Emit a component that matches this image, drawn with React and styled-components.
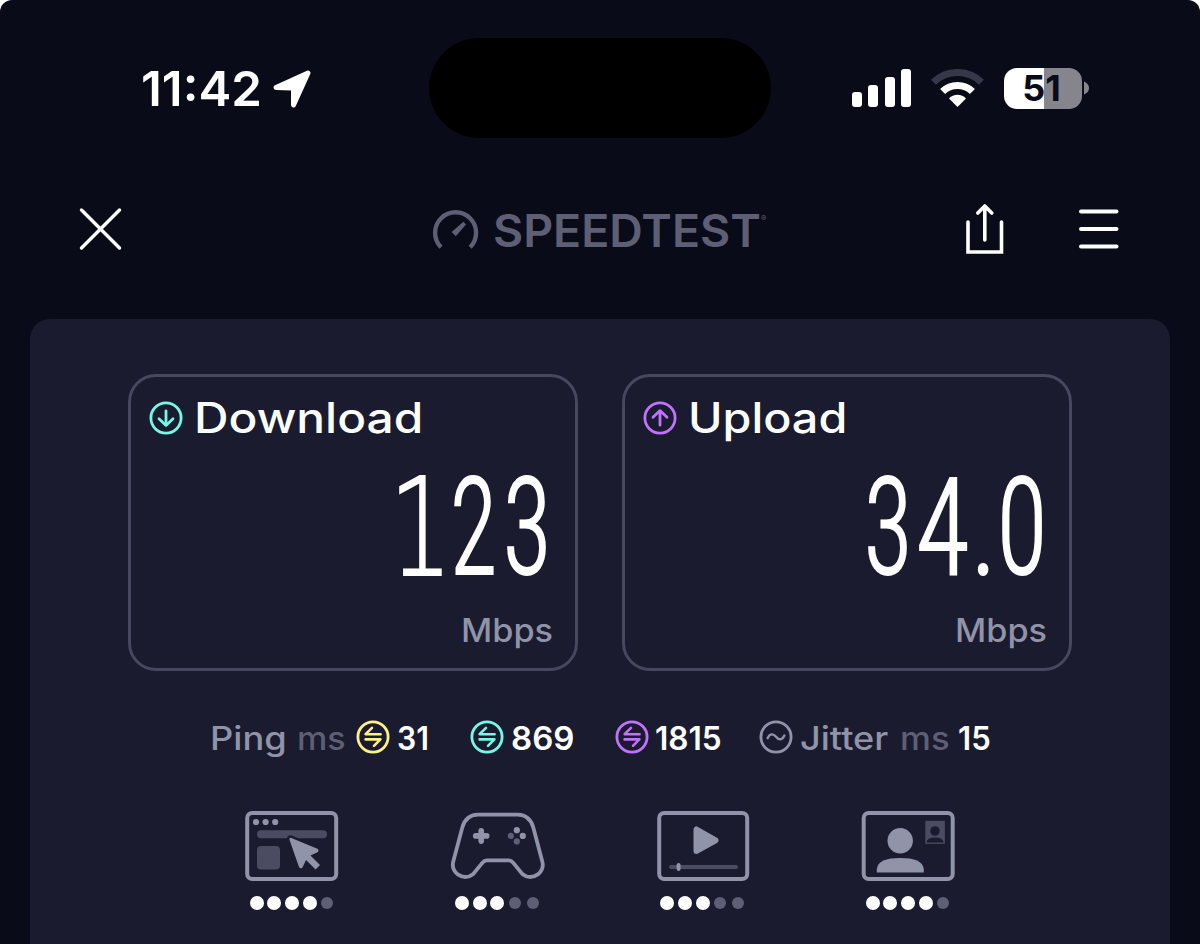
import React, { useLayoutEffect, useRef, useState } from 'react';
import styled, { createGlobalStyle, css } from 'styled-components';

const GlobalStyle = createGlobalStyle`
  * {
    box-sizing: border-box;
  }

  body {
    margin: 0;
    background: #ffffff;
    font-family: Inter, 'Liberation Sans', sans-serif;
    overflow: hidden;
  }

  svg {
    display: block;
    flex: none;
  }
`;

const Screen = styled.div`
  width: 1200px;
  height: 944px;
  overflow: hidden;
  border-radius: 12px 12px 0 0;
  background: #090b18;
  color: #ffffff;
  display: flex;
  flex-direction: column;
`;

/* text stretched to a given width */
const FitBox = styled.span`
  display: block;
  flex: none;
  white-space: nowrap;
  width: ${({ $width }) => $width}px;
  margin-left: ${({ $gap }) => $gap || 0}px;
`;

const FitText = styled.span`
  display: inline-block;
  vertical-align: top;
  transform-origin: 0 50%;
`;

const Fit = ({ width, gap, children }) => {
  const ref = useRef(null);
  const [scale, setScale] = useState(1);

  useLayoutEffect(() => {
    setScale(width / ref.current.offsetWidth);
  }, [width]);

  return (
    <FitBox $width={width} $gap={gap}>
      <FitText ref={ref} style={{ transform: `scaleX(${scale})` }}>{children}</FitText>
    </FitBox>
  );
};

const StatusBar = styled.header`
  display: grid;
  grid-template-columns: 429px 342px 429px;
  height: 138px;
  padding-top: 38px;
`;

const StatusLeft = styled.div`
  display: flex;
  align-items: center;
  padding: 2px 0 0 141px;
  gap: 11px;
`;

const Time = styled.div`
  font-size: 48.5px;
  font-weight: 600;
  line-height: 60px;
`;

const Island = styled.div`
  border-radius: 50px;
  background: #000000;
`;

const StatusRight = styled.div`
  display: flex;
  align-items: center;
  padding-left: 81px;
`;

const Signal = styled.div`
  display: flex;
  align-items: flex-end;
  gap: 6.4px;
  height: 38px;
  margin-right: 20px;
`;

const SignalBar = styled.span`
  width: 10px;
  height: ${({ $height }) => $height}px;
  border-radius: 3px;
  background: #ffffff;
`;

const Battery = styled.div`
  width: 78px;
  height: 41px;
  margin-left: 20px;
  border-radius: 13px;
  background: linear-gradient(90deg, #ffffff 51%, #85858d 51%);
  color: #090b18;
  font-size: 36px;
  font-weight: 700;
  line-height: 41px;
  padding-left: 18px;
`;

const NavBar = styled.nav`
  display: flex;
  align-items: center;
  height: 181px;
  padding: 1px 80px 0 78px;
`;

const Brand = styled.div`
  display: flex;
  align-items: center;
  margin: 1px 0 0 309px;
  color: #5e5f75;
`;

const BrandName = styled.div`
  font-size: 44.5px;
  font-weight: 600;
  line-height: 48px;
  margin-left: 14px;
  padding-top: 2px;
`;

const Registered = styled.span`
  font-size: 8px;
  align-self: flex-start;
  margin-top: 8px;
`;

const NavActions = styled.div`
  display: flex;
  align-items: center;
  gap: 73px;
  margin-left: auto;
`;

const Panel = styled.main`
  flex: 1;
  margin: 0 30px;
  padding-top: 55px;
  border-radius: 20px 20px 0 0;
  background: #1a1b2e;
`;

const Cards = styled.div`
  display: flex;
  justify-content: center;
  gap: 44px;
`;

const Card = styled.section`
  width: 450px;
  height: 297px;
  border: 3px solid #47485e;
  border-radius: 28px;
  padding: 24px 22px 0 18px;
`;

const CardHeader = styled.div`
  display: flex;
  align-items: center;
  height: 34px;
`;

const CardTitle = styled.h2`
  margin: 0;
  font-size: 42px;
  font-weight: 550;
  line-height: 44px;
`;

const Digits = styled.div`
  display: flex;
  justify-content: flex-end;
  height: 142px;
  margin-top: 22px;
  padding-right: ${({ $end }) => $end || 0}px;
  font-family: Roboto, sans-serif;
  font-size: 136px;
  font-weight: 300;
  font-stretch: 75%;
  line-height: 142px;
  -webkit-text-stroke: 2px #ffffff;
`;

const SlabDigit = styled.span`
  font-family: 'DejaVu Sans', sans-serif;
  font-size: 136px;
  font-weight: 200;
`;

const Unit = styled.div`
  display: flex;
  justify-content: flex-end;
  margin-top: 16px;
  color: #9193a8;
  font-size: 32px;
  font-weight: 550;
  line-height: 32px;
`;

const Stats = styled.div`
  display: flex;
  margin-top: 49px;
  padding-left: 180px;
  font-size: 32px;
  font-weight: 600;
  line-height: 37px;
`;

const Stat = styled.div`
  display: flex;
  height: 34px;
  margin-left: ${({ $gap }) => $gap || 0}px;
  ${({ $muted }) => $muted && css`
    color: #9193a8;
    font-weight: 550;
  `}
`;

const Dim = styled.span`
  color: #5e5f75;
`;

const Value = styled.span`
  color: #ffffff;
  font-weight: 600;
`;

const Ratings = styled.div`
  display: flex;
  justify-content: space-between;
  margin-top: 57px;
  padding: 0 215px;
`;

const Rating = styled.div`
  display: flex;
  flex-direction: column;
  align-items: center;
  width: 94px;
`;

const Dots = styled.div`
  display: flex;
  align-items: center;
  height: 14px;
  margin-top: 15px;
`;

const DotCell = styled.span`
  display: flex;
  justify-content: center;
  width: 17.6px;

  &::before {
    content: '';
    width: ${({ $on }) => ($on ? 14 : 12)}px;
    height: ${({ $on }) => ($on ? 14 : 12)}px;
    border-radius: 50%;
    background: ${({ $on }) => ($on ? '#ffffff' : '#5e5f75')};
  }
`;

const LocationIcon = () => (
  <svg width="39" height="39" viewBox="0 0 39 39">
    <path d="M3 17.5 L35 3 L20.5 35 V19.5 Q20.5 18 19 18 Z" fill="#fff" stroke="#fff" strokeWidth="5" strokeLinejoin="round" />
  </svg>
);

const WifiIcon = () => (
  <svg width="53" height="38" viewBox="0 0 53 38">
    <path d="M2.5 13.2 A34.5 34.5 0 0 1 50.5 13.2" fill="none" stroke="#37374a" strokeWidth="7" />
    <path d="M11.6 22.5 A21.5 21.5 0 0 1 41.4 22.5" fill="none" stroke="#fff" strokeWidth="7.2" />
    <path d="M26.5 38 L18 29.4 A12 12 0 0 1 35 29.4 Z" fill="#fff" />
  </svg>
);

const BatteryCap = () => (
  <svg width="7" height="14" viewBox="0 0 7 14">
    <path d="M2 0.5 Q7 2.5 7 7 Q7 11.5 2 13.5 Z" fill="#85858d" />
  </svg>
);

const CloseIcon = () => (
  <svg width="45" height="45" viewBox="0 0 45 45" stroke="#fff" strokeWidth="3.4" strokeLinecap="round">
    <path d="M3.5 3 L41.5 41 M41.5 3 L3.5 41" />
  </svg>
);

const GaugeIcon = () => (
  <svg width="47" height="42" viewBox="0 0 47 42">
    <path d="M9 38.2 A20.5 20.5 0 1 1 38.2 38.2" fill="none" stroke="#5e5f75" strokeWidth="4.4" />
    <path d="M31.4 12.8 L34 15.4 L23.8 27.2 L19.6 23 Z" fill="#5e5f75" />
  </svg>
);

const ShareIcon = () => (
  <svg width="40" height="52" viewBox="0 0 40 52" fill="none" stroke="#fff" strokeWidth="3.6" strokeLinecap="round" strokeLinejoin="round">
    <path d="M3 19 V49 H36.5 V19" strokeLinejoin="miter" />
    <path d="M19.8 37 V3 M12.8 10 L19.8 3 L26.8 10" />
  </svg>
);

const MenuIcon = () => (
  <svg width="42" height="42" viewBox="0 0 42 42" stroke="#fff" strokeWidth="4" strokeLinecap="round">
    <path d="M3 3.5 H38.5 M3 21 H38.5 M3 38.5 H38.5" />
  </svg>
);

const RingIcon = ({ color, children }) => (
  <svg width="34" height="34" viewBox="0 0 34 34" fill="none" stroke={color} strokeWidth="2.8" strokeLinecap="round" strokeLinejoin="round">
    <circle cx="17" cy="17" r="15.1" />
    {children}
  </svg>
);

const DownIcon = () => (
  <RingIcon color="#74f9e6">
    <path d="M17 9.8 V24 M10 17.8 L17 24.4 L24 17.8" />
  </RingIcon>
);

const UpIcon = () => (
  <RingIcon color="#bf71ff">
    <path d="M17 24.2 V10 M10 16.2 L17 9.6 L24 16.2" />
  </RingIcon>
);

const PingIcon = ({ color }) => (
  <RingIcon color={color}>
    <path strokeWidth="2.6" d="M16 7.8 L9.6 14.2 H24.6 M9.6 19.4 H24.4 L18 25.8" />
  </RingIcon>
);

const JitterIcon = () => (
  <RingIcon color="#9193a8">
    <path strokeWidth="2.4" d="M8.6 18.2 C10.8 13.4 14.2 13.4 17 16.8 C19.8 20.4 23.2 20.4 25.4 15.6" />
  </RingIcon>
);

const BrowsingIcon = () => (
  <svg width="94" height="70" viewBox="0 0 94 70">
    <rect x="2.2" y="2" width="89" height="66" rx="5" fill="none" stroke="#9193a8" strokeWidth="4" />
    <g fill="#9193a8">
      <circle cx="11" cy="11" r="3.1" />
      <circle cx="20.6" cy="11" r="3.1" />
      <circle cx="30.2" cy="11" r="3.1" />
    </g>
    <rect x="12" y="19.3" width="70" height="8" rx="4" fill="#4b4c62" />
    <rect x="12" y="35" width="23" height="23.5" rx="4" fill="#4b4c62" />
    <path
      d="M45.7 26.8 L73 38 Q74.3 40.5 72 41.5 L65.5 44.6 L75 54 L70.6 58.6 L61 49 L57.5 56.5 Q55.4 58.4 54 56 L44.4 28.4 Q44.2 26.6 45.7 26.8 Z"
      fill="#9193a8"
      stroke="#1a1b2e"
      strokeWidth="5"
      strokeLinejoin="round"
      paintOrder="stroke"
    />
  </svg>
);

const GamingIcon = () => (
  <svg width="95" height="70" viewBox="-0.8 -0.4 95 70">
    <path
      d="M27 3.2 H67 Q79 3.5 82.5 16 L91.5 50 Q93.5 58 87 63 Q79 68.5 71.5 62.5 L62.5 51.5 Q60.5 49 58 49 H36 Q33.5 49 31.5 51.5 L22.5 62.5 Q15 68.5 7 63 Q.5 58 2.5 50 L11.5 16 Q15 3.5 27 3.2 Z"
      fill="none"
      stroke="#9193a8"
      strokeWidth="3.8"
    />
    <path d="M30.4 19.3 V29.7 M24.9 24.5 H35.9" stroke="#9193a8" strokeWidth="5.6" strokeLinecap="round" />
    <circle cx="66" cy="18.8" r="3.1" fill="#9193a8" />
    <circle cx="72" cy="24.5" r="3.1" fill="#9193a8" />
    <circle cx="60" cy="24.5" r="3.1" fill="#5e5f75" />
    <circle cx="66" cy="30" r="3.1" fill="#5e5f75" />
  </svg>
);

const VideoIcon = () => (
  <svg width="94" height="70" viewBox="0 0 94 70">
    <rect x="3.2" y="2" width="88" height="66" rx="5" fill="none" stroke="#9193a8" strokeWidth="4" />
    <path d="M40.5 18.5 V40 L59.5 29.3 Z" fill="#9193a8" stroke="#9193a8" strokeWidth="6" strokeLinejoin="round" />
    <path d="M15 56 H80" stroke="#4b4c62" strokeWidth="4" strokeLinecap="round" />
    <path d="M22.6 54 V58" stroke="#9193a8" strokeWidth="4" strokeLinecap="round" />
  </svg>
);

const CallIcon = () => (
  <svg width="94" height="70" viewBox="0 0 94 70">
    <rect x="2.7" y="2" width="89" height="66" rx="5" fill="none" stroke="#9193a8" strokeWidth="4" />
    <circle cx="39.2" cy="29.8" r="12.7" fill="#9193a8" />
    <path d="M15.8 61.5 V58.5 C16.5 50 25 47 39.2 47 C53.5 47 62 50 62.8 58.5 V61.5 Z" fill="#9193a8" />
    <rect x="64.3" y="9.8" width="19.6" height="23" fill="#4b4c62" />
    <circle cx="74" cy="20" r="4.8" fill="#1a1b2e" />
    <path d="M65.5 31.6 Q66 26.6 74 26.6 Q82 26.6 82.6 31.6 Z" fill="#1a1b2e" />
  </svg>
);

const ratings = [
  { name: 'browsing', Icon: BrowsingIcon, score: 4 },
  { name: 'gaming', Icon: GamingIcon, score: 3 },
  { name: 'video', Icon: VideoIcon, score: 3 },
  { name: 'call', Icon: CallIcon, score: 4 },
];

export default function App() {
  return (
    <>
      <GlobalStyle />
      <Screen>
        <StatusBar>
          <StatusLeft>
            <Time><Fit width={121}>11:42</Fit></Time>
            <LocationIcon />
          </StatusLeft>
          <Island />
          <StatusRight>
            <Signal>
              <SignalBar $height={15} />
              <SignalBar $height={22} />
              <SignalBar $height={30} />
              <SignalBar $height={38} />
            </Signal>
            <WifiIcon />
            <Battery><Fit width={39}>51</Fit></Battery>
            <BatteryCap />
          </StatusRight>
        </StatusBar>

        <NavBar>
          <CloseIcon />
          <Brand>
            <GaugeIcon />
            <BrandName><Fit width={268}>SPEEDTEST</Fit></BrandName>
            <Registered>®</Registered>
          </Brand>
          <NavActions>
            <ShareIcon />
            <MenuIcon />
          </NavActions>
        </NavBar>

        <Panel>
          <Cards>
            <Card>
              <CardHeader>
                <DownIcon />
                <CardTitle><Fit width={229} gap={11}>Download</Fit></CardTitle>
              </CardHeader>
              <Digits $end={2}>
                <Fit width={64}><SlabDigit>1</SlabDigit></Fit>
                <Fit width={47} gap={-3}>2</Fit>
                <Fit width={48} gap={6.5}>3</Fit>
              </Digits>
              <Unit><Fit width={92}>Mbps</Fit></Unit>
            </Card>
            <Card>
              <CardHeader>
                <UpIcon />
                <CardTitle><Fit width={159} gap={11}>Upload</Fit></CardTitle>
              </CardHeader>
              <Digits>
                <Fit width={48}>3</Fit>
                <Fit width={53} gap={4.5}>4</Fit>
                <Fit width={26} gap={2}>.</Fit>
                <Fit width={50}>0</Fit>
              </Digits>
              <Unit><Fit width={92}>Mbps</Fit></Unit>
            </Card>
          </Cards>

          <Stats>
            <Stat $muted>
              <Fit width={77}>Ping</Fit>
              <Fit width={49} gap={10}><Dim>ms</Dim></Fit>
              <Fit width={10}>&nbsp;</Fit>
              <PingIcon color="#fdf087" />
              <Fit width={32} gap={7}><Value>31</Value></Fit>
            </Stat>
            <Stat $gap={41}>
              <PingIcon color="#74f9e6" />
              <Fit width={63} gap={7}>869</Fit>
            </Stat>
            <Stat $gap={41}>
              <PingIcon color="#bf71ff" />
              <Fit width={67} gap={6}>1815</Fit>
            </Stat>
            <Stat $muted $gap={37}>
              <JitterIcon />
              <Fit width={88} gap={7}>Jitter</Fit>
              <Fit width={50} gap={12}><Dim>ms</Dim></Fit>
              <Fit width={33} gap={8}><Value>15</Value></Fit>
            </Stat>
          </Stats>

          <Ratings>
            {ratings.map(({ name, Icon, score }) => (
              <Rating key={name}>
                <Icon />
                <Dots>
                  {[1, 2, 3, 4, 5].map(n => <DotCell key={n} $on={n <= score} />)}
                </Dots>
              </Rating>
            ))}
          </Ratings>
        </Panel>
      </Screen>
    </>
  );
}
